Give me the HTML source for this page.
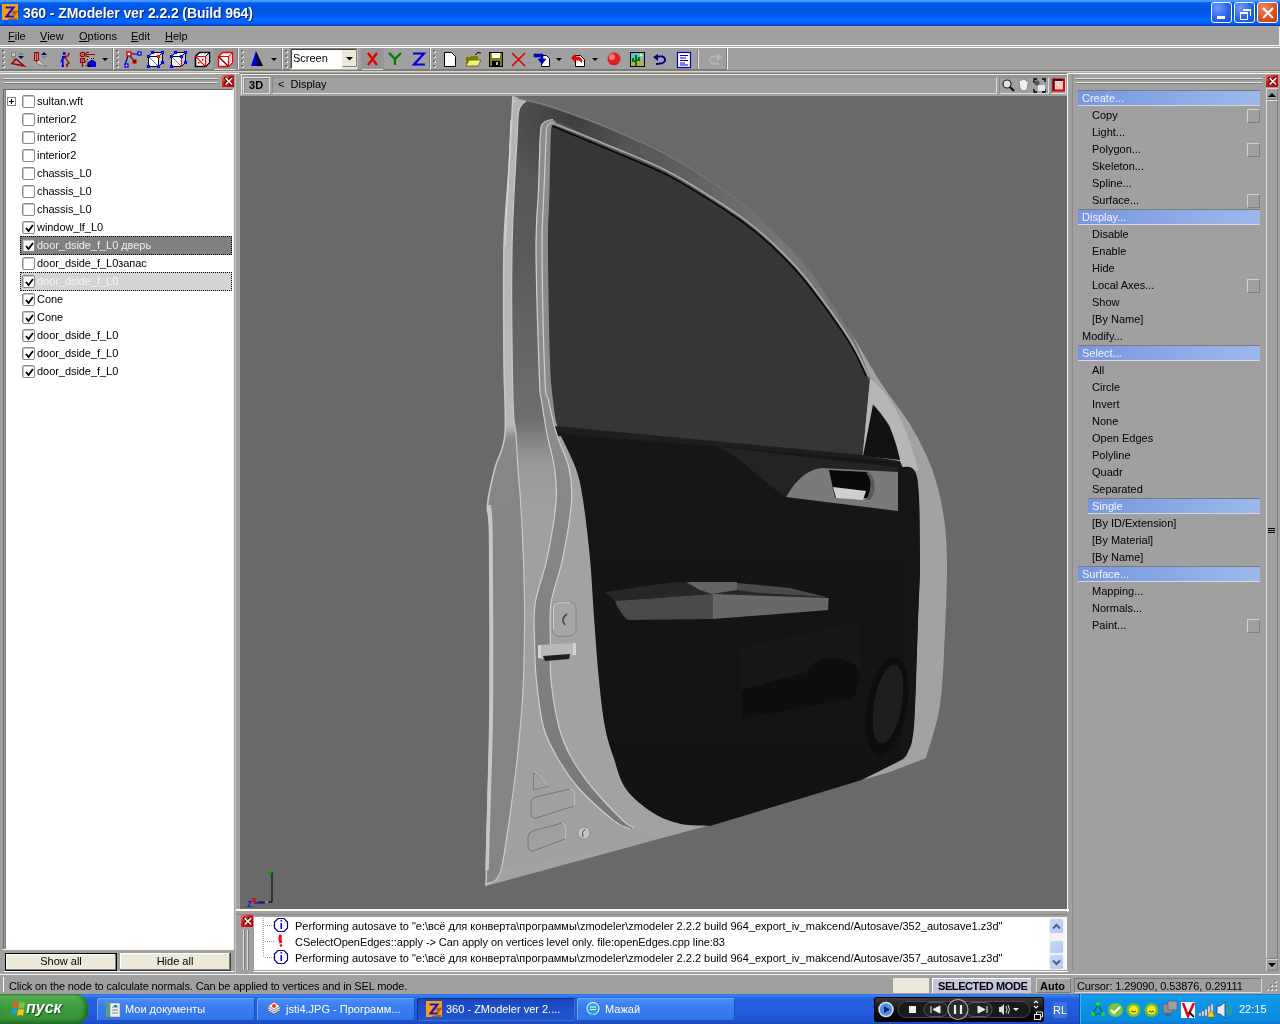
<!DOCTYPE html>
<html><head><meta charset="utf-8">
<style>
*{margin:0;padding:0;box-sizing:border-box}
html,body{width:1280px;height:1024px;overflow:hidden;background:#a0a0a0;font-family:"Liberation Sans",sans-serif;font-size:11px;color:#000}
.a{position:absolute}
#title{left:0;top:0;width:1280px;height:26px;background:linear-gradient(#4a9cff 0px,#3f94ff 1.5px,#0a6cff 2.5px,#005ae6 4px,#0055e2 9px,#0058ea 14px,#0066ff 18px,#0064fa 23px,#0046d4 25px,#0036c0 26px)}
#title .t{left:23px;top:5px;color:#fff;font-weight:bold;font-size:14px;letter-spacing:-0.1px;text-shadow:1px 1px 0 #0a1e70}
.tb{top:2px;width:21px;height:21px;border:1px solid #fff;border-radius:3px;background:radial-gradient(circle at 30% 25%,#6f9cff,#2a63f0 55%,#1a4ed8)}
#menu{left:0;top:26px;width:1280px;height:19px;}
#menu span{position:absolute;top:4px}
.sep2{left:0;width:1280px;height:1px;background:#f0f0f0}
.grip{width:3px;}
.lst div{position:absolute;left:37px;height:18px;line-height:18px;white-space:nowrap}
.cb{position:absolute;left:22px;width:13px;height:13px;border:1px solid #8a8a8a;background:#fff;border-radius:2px;box-shadow:inset 1px 1px 0 #c8c8c8}
.rp div.i{position:absolute;left:1092px;white-space:nowrap}
.hb{position:absolute;left:1078px;width:182px;height:16px;background:linear-gradient(90deg,#7796e0,#9cb9ec);color:#f4f6ff;padding-left:4px;line-height:14px;border-top:1px solid #7a7a7a;border-bottom:1px solid #d8d8d8}
.sq{position:absolute;left:1247px;width:13px;height:14px;border:1px solid;border-color:#d0d0d0 #808080 #808080 #d0d0d0}
.closex{width:12px;height:12px;background:#d21818;border-radius:1px}
</style></head><body><div id="root" style="position:absolute;left:0;top:0;width:1280px;height:1024px;will-change:transform">
<!-- TITLE -->
<div id="title" class="a">
  <svg class="a" style="left:2px;top:4px" width="16" height="16"><rect width="16" height="16" fill="#ff9e00"/><path d="M6,8 H14 L8,15 H15" stroke="#7a4a08" stroke-width="2.6" fill="none" opacity="0.7"/><path d="M3.5,3.5 H11.5 L4.5,12.5 H12" stroke="#c8b0d8" stroke-width="3.4" fill="none"/><path d="M3.5,3.5 H11.5 L4.5,12.5 H12" stroke="#3c0c80" stroke-width="2.2" fill="none"/></svg>
  <div class="a t">360 - ZModeler ver 2.2.2 (Build 964)</div>
  <div class="a tb" style="left:1211px"><div class="a" style="left:5px;top:13px;width:8px;height:3px;background:#fff"></div></div>
  <div class="a tb" style="left:1234px"><div class="a" style="left:5px;top:9px;width:8px;height:8px;border:2px solid #fff;border-width:2px 1px 1px 1px"></div><div class="a" style="left:8px;top:6px;width:8px;height:7px;border:1px solid #fff;border-top-width:2px;border-left:none;border-bottom:none"></div></div>
  <div class="a tb" style="left:1257px;background:radial-gradient(circle at 30% 25%,#f08a6a,#e0501c 55%,#c83c10)"><svg class="a" style="left:4px;top:4px" width="12" height="12"><path d="M1 1L11 11M11 1L1 11" stroke="#fff" stroke-width="2"/></svg></div>
</div>
<!-- MENU -->
<div id="menu" class="a">
  <span style="left:8px"><u>F</u>ile</span>
  <span style="left:40px"><u>V</u>iew</span>
  <span style="left:79px"><u>O</u>ptions</span>
  <span style="left:131px"><u>E</u>dit</span>
  <span style="left:165px"><u>H</u>elp</span>
</div>
<div class="a" style="left:0;top:26px;width:1280px;height:1px;background:#aca899"></div>
<div class="a" style="left:1279px;top:27px;width:1px;height:18px;background:#f0eee4"></div>
<div class="a" style="left:0;top:45px;width:1280px;height:1px;background:#fbfbf8"></div>
<div class="a" style="left:0;top:46px;width:1280px;height:1px;background:#aca899"></div>
<div class="a" style="left:0;top:47px;width:1280px;height:1px;background:#fbfbf8"></div>
<div class="a" style="left:0;top:70px;width:1280px;height:1px;background:#7c7c7c"></div>
<div class="a" style="left:0;top:71px;width:1280px;height:1px;background:#d4d4d4"></div>
<div class="a" style="left:0;top:72px;width:1280px;height:1px;background:#b0aa98"></div>
<div class="a" style="left:240px;top:73px;width:1040px;height:1px;background:#7a7668"></div>
<div class="a" style="left:240px;top:75px;width:828px;height:1px;background:#8a8a8a"></div>

<!-- TOOLBAR -->
<svg class="a" style="left:0;top:46px" width="1280" height="26" viewBox="0 46 1280 26">
<defs>
<g id="grip"><rect x="0" y="0" width="2" height="2" fill="#6e6e6e"/><rect x="1" y="1" width="2" height="2" fill="#e4e4e4"/><rect x="1" y="1" width="1" height="1" fill="#777"/></g>
<g id="grips"><use href="#grip" y="50"/><use href="#grip" y="55"/><use href="#grip" y="60"/><use href="#grip" y="65"/></g>
<path id="dd" d="M0,0 h6 l-3,3 z" fill="#000"/>
</defs>
<!-- toolbar separators (raised borders) -->
<g fill="none">
<path d="M0.5,69.5 H112.5 V48" stroke="#7c7c7c"/>
<path d="M113.5,69.5 V48" stroke="#f0f0f0"/>
<path d="M114,69.5 H237.5 V48" stroke="#7c7c7c"/>
<path d="M238.5,69.5 V48" stroke="#f0f0f0"/>
<path d="M239,69.5 H281.5 V48" stroke="#7c7c7c"/>
<path d="M282.5,69.5 V48" stroke="#f0f0f0"/>
<path d="M283,69.5 H429.5 V48" stroke="#7c7c7c"/>
<path d="M430.5,69.5 V48" stroke="#f0f0f0"/>
<path d="M431,69.5 H726.5 V48" stroke="#7c7c7c"/>
<path d="M727.5,69.5 V48" stroke="#f0f0f0"/>
</g>
<use href="#grips" x="2"/><use href="#grips" x="116"/><use href="#grips" x="241"/><use href="#grips" x="285"/><use href="#grips" x="433"/>
<!-- icon1 -->
<g>
<rect x="11.5" y="52.5" width="4" height="4" fill="#c8c8c8" stroke="#808080"/>
<path d="M13.5,57 V62" stroke="#808080" stroke-width="1.5"/>
<path d="M18,55 l3,-3 l3,3 z" fill="#808080"/><path d="M18,56 l3,3 l3,-3 z" fill="#000080"/>
<path d="M12,63.5 L16,59 L24,66 Z" fill="none" stroke="#a00000" stroke-width="1.5"/>
</g>
<!-- icon2 -->
<g>
<rect x="34.5" y="52.5" width="4" height="8" fill="none" stroke="#a00000"/>
<path d="M36.5,53 V62" stroke="#f00000" stroke-width="1"/>
<path d="M41,55 l3,-3 l3,3 z" fill="#000080"/><path d="M41,56 l3,3 l3,-3 z" fill="#808080"/>
<path d="M36,63 L39,60 L47,67 L38,64 Z" fill="#c8c8c8" stroke="#808080"/>
</g>
<!-- icon3 figure -->
<g fill="#0000f0">
<rect x="63" y="52" width="2.2" height="3"/>
<rect x="62" y="56" width="3" height="2.5"/>
<path d="M62.5,57.5 L60,62 L61,62.5 L63.5,58.5 Z"/>
<rect x="62" y="58" width="1.6" height="8.5"/>
<rect x="61.5" y="65.5" width="2.5" height="1.5"/>
</g>
<g fill="none" stroke="#a00000" stroke-width="1.3">
<path d="M65,53.5 h1"/>
<path d="M65,56.5 L68,56 L69,54 L68,53"/>
<path d="M65,57 L69,63 L66.5,65 L67.5,67"/>
</g>
<!-- icon4 -->
<g>
<circle cx="82.5" cy="54.5" r="2.2" fill="none" stroke="#a00000" stroke-width="1.2"/>
<rect x="82" y="54" width="1.2" height="1.2" fill="#f00"/>
<path d="M86,52.5 h3 M86,54.5 h9 M86,56.5 h3 M86,52.5 v4" stroke="#a00000" stroke-width="1.1" fill="none"/>
<rect x="80.5" y="58.5" width="4" height="4" fill="none" stroke="#a00000" stroke-width="1.1"/>
<path d="M82.5,59 V67" stroke="#a00000" stroke-width="1.3"/>
<path d="M82.5,59 V62" stroke="#f00" stroke-width="1"/>
<g fill="#000"><rect x="85.5" y="61" width="1" height="1"/><rect x="87" y="59" width="1" height="1"/><rect x="91" y="58" width="1" height="1"/><rect x="93" y="58" width="1" height="1"/><rect x="85.5" y="65" width="1" height="1"/></g>
<path d="M87.5,67 V63 L92,60 L96,62.5 V67 Z" fill="#0000ff"/>
<path d="M87.5,63 L92,60 L96,62.5" stroke="#000" stroke-width="0.8" fill="none"/>
<path d="M87.5,63 L87.5,67 L91,67 Z" fill="#000"/>
</g>
<use href="#dd" x="102" y="58"/>
<!-- icon5 vertex lines -->
<g>
<path d="M129,54 H139 M128,56 L125,65 M130,56 L134,61" stroke="#000080" stroke-width="1.2"/>
<rect x="127" y="52" width="4" height="4" fill="#fff" stroke="#f00000" stroke-width="1.5"/>
<rect x="138" y="52" width="3" height="3" fill="#fff" stroke="#0000f0" stroke-width="1.3"/>
<rect x="133" y="60" width="3" height="3" fill="#000" stroke="#f00000" stroke-width="1.3"/>
<rect x="125" y="64" width="3" height="3" fill="#fff" stroke="#0000f0" stroke-width="1.3"/>
</g>
<!-- cubes -->
<g id="cubeA">
<path d="M148.5,56.5 H158.5 V66.5 H148.5 Z" fill="#fff" stroke="#000"/>
<path d="M148.5,56.5 L152.5,52.5 H162.5 L158.5,56.5 Z" fill="#fff" stroke="#000"/>
<path d="M158.5,56.5 L162.5,52.5 V62.5 L158.5,66.5 Z" fill="#c8d4d4" stroke="#000"/>
<path d="M149,57 L158,66" stroke="#777"/>
</g>
<g fill="#fff" stroke="#0000f0" stroke-width="1.2"><rect x="147.5" y="55.5" width="2" height="2"/><rect x="151.5" y="51.5" width="2" height="2"/><rect x="161.5" y="51.5" width="2" height="2"/><rect x="161.5" y="61.5" width="2" height="2"/><rect x="147.5" y="65.5" width="2" height="2"/><rect x="157.5" y="65.5" width="2" height="2"/></g>
<rect x="157.5" y="55.5" width="2" height="2" fill="#fff" stroke="#f00" stroke-width="1.2"/>
<use href="#cubeA" x="23"/>
<g fill="#fff" stroke="#0000f0" stroke-width="1.2"><rect x="170.5" y="55.5" width="2" height="2"/><rect x="174.5" y="51.5" width="2" height="2"/><rect x="184.5" y="51.5" width="2" height="2"/><rect x="184.5" y="61.5" width="2" height="2"/><rect x="170.5" y="65.5" width="2" height="2"/><rect x="180.5" y="55.5" width="2" height="2"/></g>
<path d="M181.5,58 V67" stroke="#f00" stroke-width="1.2"/>
<!-- cube 3 -->
<path d="M195.5,56.5 L199.5,52.5 H209.5 V62.5 L205.5,66.5 H195.5 Z" fill="#fff" stroke="#000" stroke-width="1.6"/>
<path d="M205.5,56.5 L209.5,52.5 V62.5 L205.5,66.5 Z" fill="#d0d8d8" stroke="#000" stroke-width="1"/>
<path d="M195,56.5 H205.5 V66.5 M196,57 L205,66" fill="none" stroke="#f00" stroke-width="1.2"/>
<rect x="198" y="62" width="1.5" height="1.5" fill="#800"/><rect x="202" y="59" width="1.5" height="1.5" fill="#800"/>
<!-- cube 4 pressed -->
<rect x="213" y="48" width="24" height="21" fill="#969696"/>
<path d="M214,69.5 H236" stroke="#d8d8d8"/>
<path d="M218.5,56.5 L222.5,52.5 H232.5 V62.5 L228.5,66.5 H218.5 Z" fill="#fff" stroke="#f00" stroke-width="1.4"/>
<path d="M228.5,56.5 L232.5,52.5 V62.5 L228.5,66.5 Z" fill="#d0d8d8" stroke="#f00" stroke-width="1"/>
<path d="M218.5,56.5 H228.5 V66.5" fill="none" stroke="#f00" stroke-width="1.2"/>
<path d="M219,57 L228,66" stroke="#600" stroke-width="1.2"/>
<!-- cone -->
<path d="M256,51 L251,66 H256 Z" fill="#0000e0"/><path d="M256,51 L261,66 H256 Z" fill="#000090"/><path d="M256,51 L263,66 H259 Z" fill="#000"/>
<use href="#dd" x="271" y="58"/>
<!-- combo -->
<rect x="290.5" y="48.5" width="67" height="21" fill="#ece9d8" stroke="none"/>
<path d="M290.5,69 V48.5 H357.5" stroke="#808080" fill="none"/>
<path d="M291.5,68 V49.5 H356.5" stroke="#404040" fill="none"/>
<rect x="292" y="50" width="50" height="19" fill="#fff"/>
<rect x="342" y="50" width="15" height="17" fill="#ece9d8"/>
<path d="M342.5,66.5 H356.5 V50" stroke="#808080" fill="none"/>
<path d="M346,57 h7 l-3.5,3.5 z" fill="#000"/>
<!-- XYZ -->
<rect x="361" y="48" width="23" height="21" fill="#969696"/>
<path d="M362,69.5 H383" stroke="#d8d8d8"/>
<path d="M368,53 L377,65 M377,53 L368,65" stroke="#e00000" stroke-width="2.4"/>
<path d="M389,53 L395,59 L401,53 M395,59 V65" stroke="#008000" stroke-width="2.4" fill="none"/>
<path d="M413,53.5 H424 L414,64.5 H425" stroke="#0000e0" stroke-width="2.2" fill="none"/>
<!-- new doc -->
<path d="M444.5,52.5 H451.5 L455.5,56.5 V66.5 H444.5 Z" fill="#fff" stroke="#000"/>
<!-- open -->
<path d="M466,57 H470 L471,56 H478 V66 H466 Z" fill="#808000"/>
<path d="M466,66 L469,60 H481 L478,66 Z" fill="#f0f080" stroke="#606000" stroke-width="0.8"/>
<path d="M475,55 Q478,51 481,53" stroke="#000" fill="none"/>
<!-- save -->
<rect x="489.5" y="52.5" width="13" height="14" fill="#808000" stroke="#000"/>
<rect x="492" y="53" width="8" height="5" fill="#fff"/>
<rect x="492" y="61" width="8" height="5" fill="#000"/>
<rect x="496" y="62" width="2" height="3" fill="#c0c0c0"/>
<!-- red X -->
<path d="M512,53 L525,66 M525,53 L512,66" stroke="#e00000" stroke-width="1.6"/>
<!-- import -->
<path d="M541.5,55.5 H546.5 L549.5,58.5 V66.5 H541.5 Z" fill="#fff" stroke="#000"/>
<path d="M534,54 H543 V59 H546 L542,64 L538,59 H541 V57 H534 Z" fill="#0000e0" stroke="#000080" stroke-width="0.6"/>
<use href="#dd" x="556" y="58"/>
<!-- export -->
<path d="M575.5,55.5 H580.5 L584.5,59.5 V66.5 H575.5 Z" fill="#fff" stroke="#000"/>
<path d="M571,58 L575,54 V56.5 H579 L582,59 V63 L579,60.5 H575 V62 Z" fill="#f00000"/>
<use href="#dd" x="592" y="58"/>
<!-- red sphere -->
<circle cx="614" cy="59" r="6.5" fill="#e02020"/>
<circle cx="612" cy="57" r="3" fill="#ff9090" opacity="0.8"/>
<!-- cactus image -->
<rect x="630.5" y="52.5" width="14" height="14" fill="#b8a860" stroke="#000"/>
<rect x="631" y="53" width="13" height="7" fill="#70b8e0"/>
<path d="M636,66 V55 M633,58 V61 H636 M639,57 V60 H636" stroke="#008000" stroke-width="2" fill="none"/>
<circle cx="641" cy="55" r="1.5" fill="#ffff00"/>
<!-- undo -->
<path d="M656,64 Q666,64 665,59 Q664,55 656,57" stroke="#000080" stroke-width="1.8" fill="none"/>
<path d="M653,57 L658,54 L658,61 Z" fill="#000080"/>
<!-- document -->
<rect x="677.5" y="52.5" width="13" height="15" fill="#fff" stroke="#0000c0" stroke-width="1.2"/>
<path d="M680,55.5 h8 M680,58 h6 M680,60.5 h8 M680,63 h5 M680,65 h8" stroke="#0000c0"/>
<!-- separator -->
<path d="M697.5,49 V69" stroke="#808080"/><path d="M698.5,49 V69" stroke="#e8e8e8"/>
<!-- redo greyed -->
<path d="M719,64 Q709,64 710,59 Q711,55 719,57" stroke="#b8b8b8" stroke-width="1.5" fill="none"/>
<path d="M722,57 L717,54 L717,61 Z" fill="#b8b8b8"/>
</svg>

<div class="a" style="left:293px;top:52px;font-size:11px">Screen</div>
<!-- LEFT PANEL -->
<div class="a" style="left:5px;top:89px;width:229px;height:860px;background:#fff;border-left:1px solid #808080;border-top:1px solid #808080"></div>
<div class="a" style="left:7px;top:97px;width:9px;height:9px;border:1px solid #808080;background:#fff"><div class="a" style="left:1px;top:3px;width:5px;height:1px;background:#000"></div><div class="a" style="left:3px;top:1px;width:1px;height:5px;background:#000"></div></div>
<div class="cb" style="top:95px"></div>
<div class="a" style="left:37px;top:95px;white-space:nowrap;color:#000;letter-spacing:-0.05px">sultan.wft</div>
<div class="cb" style="top:113px"></div>
<div class="a" style="left:37px;top:113px;white-space:nowrap;color:#000;letter-spacing:-0.05px">interior2</div>
<div class="cb" style="top:131px"></div>
<div class="a" style="left:37px;top:131px;white-space:nowrap;color:#000;letter-spacing:-0.05px">interior2</div>
<div class="cb" style="top:149px"></div>
<div class="a" style="left:37px;top:149px;white-space:nowrap;color:#000;letter-spacing:-0.05px">interior2</div>
<div class="cb" style="top:167px"></div>
<div class="a" style="left:37px;top:167px;white-space:nowrap;color:#000;letter-spacing:-0.05px">chassis_L0</div>
<div class="cb" style="top:185px"></div>
<div class="a" style="left:37px;top:185px;white-space:nowrap;color:#000;letter-spacing:-0.05px">chassis_L0</div>
<div class="cb" style="top:203px"></div>
<div class="a" style="left:37px;top:203px;white-space:nowrap;color:#000;letter-spacing:-0.05px">chassis_L0</div>
<div class="cb" style="top:221px"><svg class="a" style="left:2px;top:2px" width="9" height="9"><path d="M1,4 L3.5,7 L8,1" fill="none" stroke="#000" stroke-width="1.8"/></svg></div>
<div class="a" style="left:37px;top:221px;white-space:nowrap;color:#000;letter-spacing:-0.05px">window_lf_L0</div>
<div class="a" style="left:20px;top:236px;width:212px;height:19px;background:#808080;border:1px dotted #000"></div>
<div class="cb" style="top:239px"><svg class="a" style="left:2px;top:2px" width="9" height="9"><path d="M1,4 L3.5,7 L8,1" fill="none" stroke="#000" stroke-width="1.8"/></svg></div>
<div class="a" style="left:37px;top:239px;white-space:nowrap;color:#ececec;letter-spacing:-0.05px">door_dside_f_L0 дверь</div>
<div class="cb" style="top:257px"></div>
<div class="a" style="left:37px;top:257px;white-space:nowrap;color:#000;letter-spacing:-0.05px">door_dside_f_L0запас</div>
<div class="a" style="left:20px;top:272px;width:212px;height:19px;background:#d4d4d4;border:1px dotted #000"></div>
<div class="cb" style="top:275px"><svg class="a" style="left:2px;top:2px" width="9" height="9"><path d="M1,4 L3.5,7 L8,1" fill="none" stroke="#000" stroke-width="1.8"/></svg></div>
<div class="a" style="left:37px;top:275px;white-space:nowrap;color:#f4f4f4;letter-spacing:-0.05px">door_dside_f_L0</div>
<div class="cb" style="top:293px"><svg class="a" style="left:2px;top:2px" width="9" height="9"><path d="M1,4 L3.5,7 L8,1" fill="none" stroke="#000" stroke-width="1.8"/></svg></div>
<div class="a" style="left:37px;top:293px;white-space:nowrap;color:#000;letter-spacing:-0.05px">Cone</div>
<div class="cb" style="top:311px"><svg class="a" style="left:2px;top:2px" width="9" height="9"><path d="M1,4 L3.5,7 L8,1" fill="none" stroke="#000" stroke-width="1.8"/></svg></div>
<div class="a" style="left:37px;top:311px;white-space:nowrap;color:#000;letter-spacing:-0.05px">Cone</div>
<div class="cb" style="top:329px"><svg class="a" style="left:2px;top:2px" width="9" height="9"><path d="M1,4 L3.5,7 L8,1" fill="none" stroke="#000" stroke-width="1.8"/></svg></div>
<div class="a" style="left:37px;top:329px;white-space:nowrap;color:#000;letter-spacing:-0.05px">door_dside_f_L0</div>
<div class="cb" style="top:347px"><svg class="a" style="left:2px;top:2px" width="9" height="9"><path d="M1,4 L3.5,7 L8,1" fill="none" stroke="#000" stroke-width="1.8"/></svg></div>
<div class="a" style="left:37px;top:347px;white-space:nowrap;color:#000;letter-spacing:-0.05px">door_dside_f_L0</div>
<div class="cb" style="top:365px"><svg class="a" style="left:2px;top:2px" width="9" height="9"><path d="M1,4 L3.5,7 L8,1" fill="none" stroke="#000" stroke-width="1.8"/></svg></div>
<div class="a" style="left:37px;top:365px;white-space:nowrap;color:#000;letter-spacing:-0.05px">door_dside_f_L0</div>

<!-- VIEWPORT -->
<div class="a" style="left:240px;top:74px;width:828px;height:22px;border-top:1px solid #d8d8d8"></div>
<div class="a" style="left:240px;top:96px;width:827px;height:813px;background:#696969"></div>
<svg class="a" style="left:240px;top:96px" width="827" height="814" viewBox="240 96 827 814">
<defs>
<linearGradient id="fr" x1="0" y1="96" x2="0" y2="520" gradientUnits="userSpaceOnUse"><stop offset="0" stop-color="#545454"/><stop offset="0.36" stop-color="#5a5a5a"/><stop offset="0.67" stop-color="#6a6a6a"/><stop offset="0.76" stop-color="#6e6e6e"/><stop offset="0.86" stop-color="#989898"/><stop offset="1" stop-color="#a0a0a0"/></linearGradient>
<linearGradient id="frA" x1="0" y1="96" x2="0" y2="520" gradientUnits="userSpaceOnUse"><stop offset="0" stop-color="#b4b4b4"/><stop offset="0.776" stop-color="#b8b8b8"/><stop offset="0.81" stop-color="#888"/><stop offset="1" stop-color="#858585"/></linearGradient>
<linearGradient id="gr" x1="0" y1="96" x2="0" y2="820" gradientUnits="userSpaceOnUse"><stop offset="0" stop-color="#8c8c8c"/><stop offset="0.45" stop-color="#8c8c8c"/><stop offset="0.55" stop-color="#888"/><stop offset="1" stop-color="#787878"/></linearGradient>
<radialGradient id="cornerSh" cx="570" cy="118" r="70" gradientUnits="userSpaceOnUse"><stop offset="0" stop-color="#000" stop-opacity="0.28"/><stop offset="1" stop-color="#000" stop-opacity="0"/></radialGradient>
<linearGradient id="bp" x1="0" y1="430" x2="0" y2="830" gradientUnits="userSpaceOnUse"><stop offset="0" stop-color="#171717"/><stop offset="1" stop-color="#121212"/></linearGradient>
</defs>
<path d="M513.0,96.0 C520.2,98.0 539.5,102.5 556.0,108.0 C572.5,113.5 593.2,121.0 612.0,129.0 C630.8,137.0 650.2,145.7 669.0,156.0 C687.8,166.3 708.7,179.5 725.0,191.0 C741.3,202.5 753.0,211.8 767.0,225.0 C781.0,238.2 795.3,252.5 809.0,270.0 C822.7,287.5 837.0,311.2 849.0,330.0 C861.0,348.8 870.7,367.0 881.0,383.0 C891.3,399.0 902.5,411.7 911.0,426.0 C919.5,440.3 926.7,454.7 932.0,469.0 C937.3,483.3 940.5,496.8 943.0,512.0 C945.5,527.2 946.7,540.3 947.0,560.0 C947.3,579.7 946.2,605.8 945.0,630.0 C943.8,654.2 943.2,683.7 940.0,705.0 C936.8,726.3 928.3,749.2 926.0,758.0 L890,772 L862,780 L710,825 L486,886 C486.3,871.7 487.3,831.0 488.0,800.0 C488.7,769.0 489.7,743.8 490.0,700.0 C490.3,656.2 490.0,569.5 489.6,537.0 C489.2,504.5 486.6,516.5 487.5,505.0 C488.4,493.5 492.1,479.8 495.0,468.0 C497.9,456.2 503.5,451.7 505.0,434.0 C506.5,416.3 504.2,393.3 504.0,362.0 C503.8,330.7 503.2,278.3 504.0,246.0 C504.8,213.7 507.5,193.0 509.0,168.0 C510.5,143.0 512.3,108.0 513.0,96.0 Z" fill="#a2a2a2"/>
<path d="M486.0,886.0 C486.3,871.7 487.3,831.0 488.0,800.0 C488.7,769.0 489.7,743.8 490.0,700.0 C490.3,656.2 490.0,569.5 489.6,537.0 C489.2,504.5 486.6,516.5 487.5,505.0 C488.4,493.5 492.1,479.8 495.0,468.0 C497.9,456.2 503.5,451.7 505.0,434.0 C506.5,416.3 504.2,393.3 504.0,362.0 C503.8,330.7 503.2,278.3 504.0,246.0 C504.8,213.7 507.5,193.0 509.0,168.0 C510.5,143.0 512.3,108.0 513.0,96.0 C515.2,96.8 523.8,100.2 526.0,101.0 C524.8,102.5 520.5,103.5 519.0,110.0 C517.5,116.5 518.2,116.7 517.0,140.0 C515.8,163.3 512.7,206.7 512.0,250.0 C511.3,293.3 512.3,369.3 513.0,400.0 C513.7,430.7 515.2,422.3 516.0,434.0 C516.8,445.7 517.2,459.0 518.0,470.0 C518.8,481.0 519.6,485.2 520.5,500.0 C521.4,514.8 522.7,539.1 523.4,558.6 C524.1,578.1 524.7,595.1 524.6,617.0 C524.5,638.9 524.1,667.7 523.0,690.0 C521.9,712.3 519.7,733.8 518.0,751.0 C516.3,768.2 515.8,773.2 513.0,793.0 C510.2,812.8 505.3,854.8 501.0,870.0 C496.7,885.2 489.3,881.7 487.0,884.0 Z" fill="url(#frA)"/>
<path d="M526,101 C531.0,102.3 541.7,104.2 556.0,109.0 C570.3,113.8 593.2,122.0 612.0,130.0 C630.8,138.0 650.2,146.7 669.0,157.0 C687.8,167.3 708.7,180.5 725.0,192.0 C741.3,203.5 753.0,212.8 767.0,226.0 C781.0,239.2 795.3,253.5 809.0,271.0 C822.7,288.5 838.8,313.0 849.0,331.0 C859.2,349.0 866.5,371.0 870.0,379.0 L870,381 C866.5,374.2 859.2,356.2 849.0,340.0 C838.8,323.8 820.3,298.5 809.0,284.0 C797.7,269.5 790.3,262.3 781.0,253.0 C771.7,243.7 762.3,235.5 753.0,228.0 C743.7,220.5 739.0,217.0 725.0,208.0 C711.0,199.0 687.8,183.8 669.0,174.0 C650.2,164.2 631.2,157.2 612.0,149.0 C592.8,140.8 563.7,129.0 554.0,125.0 L551,127 L541,127 C539.8,148.3 539.2,171.7 538.5,190.0 C537.8,208.3 535.8,218.3 536.0,250.0 C536.2,281.7 538.6,355.0 539.5,380.0 C540.4,405.0 540.2,391.0 541.5,400.0 C542.8,409.0 544.8,422.7 547.0,434.0 C549.2,445.3 553.0,456.7 554.5,468.0 C556.0,479.3 557.2,486.9 556.0,502.0 C554.8,517.1 550.5,541.8 547.0,558.6 C543.5,575.4 537.3,589.4 535.2,603.0 C533.1,616.6 534.3,627.2 534.5,640.0 C534.7,652.8 534.9,665.5 536.4,680.0 C537.9,694.5 539.9,714.0 543.4,727.0 C546.9,740.0 551.5,747.7 557.5,758.0 C563.5,768.3 570.0,778.6 579.4,789.0 C588.8,799.4 605.3,813.9 613.8,820.6 C622.2,827.3 627.3,827.6 630.0,829.0 L660,838 L501,870 C503.0,857.2 510.2,812.8 513.0,793.0 C515.8,773.2 516.3,768.2 518.0,751.0 C519.7,733.8 521.9,712.3 523.0,690.0 C524.1,667.7 524.5,638.9 524.6,617.0 C524.7,595.1 524.1,578.1 523.4,558.6 C522.7,539.1 521.4,514.8 520.5,500.0 C519.6,485.2 518.8,481.0 518.0,470.0 C517.2,459.0 516.8,445.7 516.0,434.0 C515.2,422.3 513.7,430.7 513.0,400.0 C512.3,369.3 511.3,293.3 512.0,250.0 C512.7,206.7 515.8,163.3 517.0,140.0 C518.2,116.7 517.5,116.5 519.0,110.0 C520.5,103.5 524.8,102.5 526.0,101.0 Z" fill="url(#fr)"/>
<path d="M526,101 L556,109 L612,130 L660,152 L612,147 L553,119.5 Q543,120 541,127 L540,200 L515,200 L519,110 Z" fill="url(#cornerSh)"/>
<path d="M540,140 L541,127 Q543,120 553,119.5 L556,122 L551,127 C550.9,129.2 550.9,129.5 550.6,140.0 C550.4,150.5 549.9,171.7 549.5,190.0 C549.1,208.3 547.9,221.3 548.0,250.0 C548.1,278.7 549.2,337.0 550.0,362.0 C550.8,387.0 552.0,389.0 553.0,400.0 C554.0,411.0 553.3,416.7 556.0,428.0 C558.7,439.3 566.4,455.7 569.0,468.0 C571.6,480.3 572.5,486.9 571.5,502.0 C570.5,517.1 566.1,541.8 562.7,558.6 C559.3,575.4 553.0,589.4 551.0,603.0 C549.0,616.6 550.4,627.2 550.4,640.0 C550.4,652.8 549.6,665.5 551.0,680.0 C552.4,694.5 555.6,714.0 559.0,727.0 C562.4,740.0 565.9,747.7 571.6,758.0 C577.3,768.3 584.8,778.6 593.4,789.0 C602.0,799.4 616.2,814.1 623.0,820.6 C629.8,827.1 632.2,826.8 634.0,828.0 L630,829 C627.3,827.6 622.2,827.3 613.8,820.6 C605.3,813.9 588.8,799.4 579.4,789.0 C570.0,778.6 563.5,768.3 557.5,758.0 C551.5,747.7 546.9,740.0 543.4,727.0 C539.9,714.0 537.9,694.5 536.4,680.0 C534.9,665.5 534.7,652.8 534.5,640.0 C534.3,627.2 533.1,616.6 535.2,603.0 C537.3,589.4 543.5,575.4 547.0,558.6 C550.5,541.8 554.8,517.1 556.0,502.0 C557.2,486.9 556.0,479.3 554.5,468.0 C553.0,456.7 549.2,445.3 547.0,434.0 C544.8,422.7 542.8,409.0 541.5,400.0 C540.2,391.0 540.4,405.0 539.5,380.0 C538.6,355.0 536.2,281.7 536.0,250.0 C535.8,218.3 537.8,208.3 538.5,190.0 C539.2,171.7 539.8,148.3 540.0,140.0 Z" fill="url(#gr)"/>
<path d="M540.0,140.0 C539.8,148.3 539.2,171.7 538.5,190.0 C537.8,208.3 535.8,218.3 536.0,250.0 C536.2,281.7 538.6,355.0 539.5,380.0 C540.4,405.0 540.2,391.0 541.5,400.0 C542.8,409.0 544.8,422.7 547.0,434.0 C549.2,445.3 553.0,456.7 554.5,468.0 C556.0,479.3 557.2,486.9 556.0,502.0 C554.8,517.1 550.5,541.8 547.0,558.6 C543.5,575.4 537.3,589.4 535.2,603.0 C533.1,616.6 534.3,627.2 534.5,640.0 C534.7,652.8 534.9,665.5 536.4,680.0 C537.9,694.5 539.9,714.0 543.4,727.0 C546.9,740.0 551.5,747.7 557.5,758.0 C563.5,768.3 570.0,778.6 579.4,789.0 C588.8,799.4 605.3,813.9 613.8,820.6 C622.2,827.3 627.3,827.6 630.0,829.0" fill="none" stroke="#cfcfcf" stroke-width="1.2"/>
<path d="M546.0,140.0 C545.7,148.3 544.7,171.7 544.0,190.0 C543.3,208.3 541.8,218.3 542.0,250.0 C542.2,281.7 543.9,355.0 545.0,380.0 C546.1,405.0 546.5,391.0 548.4,400.0 C550.3,409.0 553.2,422.7 556.6,434.0 C560.0,445.3 566.5,456.7 569.0,468.0 C571.5,479.3 572.5,486.9 571.5,502.0 C570.5,517.1 566.1,541.8 562.7,558.6 C559.3,575.4 553.0,589.4 551.0,603.0 C549.0,616.6 550.4,627.2 550.4,640.0 C550.4,652.8 549.6,665.5 551.0,680.0 C552.4,694.5 555.6,714.0 559.0,727.0 C562.4,740.0 565.9,747.7 571.6,758.0 C577.3,768.3 584.8,778.6 593.4,789.0 C602.0,799.4 616.2,814.1 623.0,820.6 C629.8,827.1 632.2,826.8 634.0,828.0" fill="none" stroke="#cfcfcf" stroke-width="1.2"/>
<path d="M540,140 L541,127 Q543,120 553,119.5" fill="none" stroke="#c8c8c8" stroke-width="1.2"/>
<path d="M546,140 L546.5,128 Q548,123 553,122.5" fill="none" stroke="#c0c0c0" stroke-width="1.2"/>
<path d="M538,250 L538,134 Q539,122 549,122 L553,124 L549,130 L548,250 Z" fill="none"/>
<path d="M526.0,101.0 C524.8,102.5 520.5,103.5 519.0,110.0 C517.5,116.5 518.2,116.7 517.0,140.0 C515.8,163.3 512.7,206.7 512.0,250.0 C511.3,293.3 512.3,369.3 513.0,400.0 C513.7,430.7 515.2,422.3 516.0,434.0 C516.8,445.7 517.2,459.0 518.0,470.0 C518.8,481.0 519.6,485.2 520.5,500.0 C521.4,514.8 522.7,539.1 523.4,558.6 C524.1,578.1 524.7,595.1 524.6,617.0 C524.5,638.9 524.1,667.7 523.0,690.0 C521.9,712.3 519.7,733.8 518.0,751.0 C516.3,768.2 515.8,773.2 513.0,793.0 C510.2,812.8 505.3,854.8 501.0,870.0 C496.7,885.2 489.3,881.7 487.0,884.0" fill="none" stroke="#c8c8c8" stroke-width="1.2"/>
<path d="M486.0,886.0 C486.3,871.7 487.3,831.0 488.0,800.0 C488.7,769.0 489.7,743.8 490.0,700.0 C490.3,656.2 490.0,569.5 489.6,537.0 C489.2,504.5 486.6,516.5 487.5,505.0 C488.4,493.5 492.1,479.8 495.0,468.0 C497.9,456.2 503.5,451.7 505.0,434.0 C506.5,416.3 504.2,393.3 504.0,362.0 C503.8,330.7 503.2,278.3 504.0,246.0 C504.8,213.7 507.5,193.0 509.0,168.0 C510.5,143.0 512.3,108.0 513.0,96.0" fill="none" stroke="#c6c6c6" stroke-width="1.6"/>
<path d="M487.0,870.0 C487.3,858.3 488.2,828.3 489.0,800.0 C489.8,771.7 491.2,743.8 491.5,700.0 C491.8,656.2 491.4,569.5 491.0,537.0 C490.6,504.5 489.3,510.3 489.0,505.0" fill="none" stroke="#c6c6c6" stroke-width="3.5"/>
<path d="M505,246 L509,168 L511,120" fill="none" stroke="#d4d4d4" stroke-width="1.2"/>
<path d="M518.0,98.0 C524.3,99.8 540.3,103.7 556.0,109.0 C571.7,114.3 593.2,122.0 612.0,130.0 C630.8,138.0 650.2,146.7 669.0,157.0 C687.8,167.3 708.7,180.5 725.0,192.0 C741.3,203.5 753.0,212.8 767.0,226.0 C781.0,239.2 795.3,253.5 809.0,271.0 C822.7,288.5 838.8,313.0 849.0,331.0 C859.2,349.0 866.5,371.0 870.0,379.0" fill="none" stroke="#646464" stroke-width="1.2"/>
<linearGradient id="tb" x1="660" y1="0" x2="780" y2="0" gradientUnits="userSpaceOnUse"><stop offset="0" stop-color="#5a5a5a"/><stop offset="1" stop-color="#767676"/></linearGradient>
<path d="M640.0,142.0 C644.8,144.5 654.8,148.7 669.0,157.0 C683.2,165.3 708.7,180.5 725.0,192.0 C741.3,203.5 753.0,212.8 767.0,226.0 C781.0,239.2 795.3,253.5 809.0,271.0 C822.7,288.5 838.8,313.0 849.0,331.0 C859.2,349.0 866.5,371.0 870.0,379.0 L868,378 C864.8,371.5 858.8,354.8 849.0,339.0 C839.2,323.2 820.3,297.5 809.0,283.0 C797.7,268.5 790.3,261.3 781.0,252.0 C771.7,242.7 762.3,234.5 753.0,227.0 C743.7,219.5 739.0,216.0 725.0,207.0 C711.0,198.0 683.2,181.7 669.0,173.0 C654.8,164.3 644.8,158.0 640.0,155.0 Z" fill="url(#tb)"/>
<path d="M554,125 C563.7,129.0 592.8,140.8 612.0,149.0 C631.2,157.2 650.2,164.2 669.0,174.0 C687.8,183.8 711.0,199.0 725.0,208.0 C739.0,217.0 743.7,220.5 753.0,228.0 C762.3,235.5 771.7,243.7 781.0,253.0 C790.3,262.3 797.7,269.5 809.0,284.0 C820.3,298.5 838.8,323.8 849.0,340.0 C859.2,356.2 866.5,374.2 870.0,381.0 L862.6,456 L558,427 C555.5,423.3 554.0,411.0 553.0,400.0 C552.0,389.0 550.8,387.0 550.0,362.0 C549.2,337.0 548.1,278.7 548.0,250.0 C547.9,221.3 549.1,208.3 549.5,190.0 C549.9,171.7 550.4,149.8 550.6,140.0 C550.9,130.2 550.9,132.5 551.0,131.0 Q551,125 554,125 Z" fill="#363636"/>
<path d="M552.0,126.0 C562.0,130.2 592.5,142.7 612.0,151.0 C631.5,159.3 650.2,166.2 669.0,176.0 C687.8,185.8 711.0,201.0 725.0,210.0 C739.0,219.0 743.7,222.5 753.0,230.0 C762.3,237.5 771.7,245.7 781.0,255.0 C790.3,264.3 797.7,271.5 809.0,286.0 C820.3,300.5 839.5,327.0 849.0,342.0 C858.5,357.0 863.2,370.3 866.0,376.0" fill="none" stroke="#000" stroke-width="1.3"/>
<path d="M550.0,122.0 C560.3,126.2 592.2,138.7 612.0,147.0 C631.8,155.3 650.2,162.2 669.0,172.0 C687.8,181.8 711.0,197.0 725.0,206.0 C739.0,215.0 743.7,218.5 753.0,226.0 C762.3,233.5 771.7,241.7 781.0,251.0 C790.3,260.3 797.7,267.5 809.0,282.0 C820.3,296.5 839.0,322.2 849.0,338.0 C859.0,353.8 865.7,370.5 869.0,377.0" fill="none" stroke="#a8a8a8" stroke-width="1.6"/>
<!-- pillar -->
<path d="M870,379 C878,385 888,395 896,410 C905,428 912,445 918,470 L904,470 L900,464 L862.6,457 Z" fill="#b6b6b6"/>
<path d="M873,404.4 C880,412 886,420 889.4,426 C895,440 898,450 900,460 L863,456 Z" fill="#121212"/>
<!-- belt band -->
<path d="M555,426 L862.6,455 L900,461 L904,470 L718.7,452 L558,436 Z" fill="#1e1e1e"/>
<path d="M557.0,428.0 C560.1,434.7 571.4,456.0 575.7,468.0 C580.0,480.0 580.6,484.9 583.0,500.0 C585.4,515.1 588.2,539.1 590.0,558.6 C591.8,578.1 592.5,596.8 594.0,617.0 C595.5,637.2 597.2,661.7 599.0,680.0 C600.8,698.3 602.5,714.0 605.0,727.0 C607.5,740.0 610.2,747.7 613.8,758.0 C617.2,768.3 619.5,779.9 626.0,789.0 C632.5,798.1 643.8,807.0 652.8,812.8 C661.8,818.6 670.5,821.5 680.0,823.8 C689.5,826.0 705.0,825.6 710.0,826.0 L862,780 C901.2,759.8 904.7,759.8 907.0,754.0 C909.3,748.2 912.2,748.3 914.0,726.0 C915.8,703.7 917.0,647.7 918.0,620.0 C919.0,592.3 920.2,583.8 920.0,560.0 C919.8,536.2 920.3,492.5 917.0,477.0 C913.7,461.5 902.8,468.7 900.0,467.0 L898,462 L718.7,446.7 L558,434 Z" fill="url(#bp)"/>
<path d="M900,467 L917,477 L920,560 L918,620 L914,726 L907,754 L900,761 L905,620 L904,540 L897,515 Z" fill="#161616"/>
<!-- upper trim strip -->
<path d="M718,447 C745,460 760,480 786,497 L898,511 L898,467 Z" fill="#232323"/>
<!-- handle bezel -->
<path d="M786,497 C796,480 806,470 822,468 L898,472 L898,511 Z" fill="#7a7a7a"/>
<path d="M829,470 L868,472 C872,476 872,488 868,498 L835,498 Z" fill="#0a0a0a"/>
<path d="M833,487 L866,491 L863,500 L836,498 Z" fill="#cfcfcf"/>
<path d="M868,472 C876,476 877,492 870,500 L866,500 C872,490 872,478 866,473 Z" fill="#5a5a5a"/>
<!-- armrest -->
<path d="M605,592 L675,582 L788,588 L826,597 L829,599 L712,594 L615,601 Z" fill="#272727"/>
<path d="M686,582 L737,582 L737,590 L712,594 L700,590 Z" fill="#646464"/>
<path d="M737,583 L790,588 L826,597 L760,593 L737,590 Z" fill="#4a4a4a"/>
<path d="M615,601 L712.5,594 L712.5,619 L628,620 Q620,614 615,601 Z" fill="#4a4a4a"/>
<path d="M712.5,594 L828.75,598 L828,610 L712.5,619 Z" fill="#686868"/>
<!-- pocket & speaker -->
<path d="M740,648 L829,628 L858,622 L861,690 L742,718 Z" fill="#171717"/>
<path d="M741,690 L806,672 C812,662 822,657 835,658 C852,660 862,668 860,680 L853,698 L742,718 Z" fill="#0e0e0e"/>
<ellipse cx="887" cy="706" rx="20" ry="50" fill="#0d0d0d" transform="rotate(10 887 706)"/>
<ellipse cx="888" cy="704" rx="14" ry="40" fill="#1f1f1f" transform="rotate(10 888 704)"/>
<!-- lock -->
<path d="M553,607 Q553,603 558,602.5 L570,602 Q576,602.5 576,608 L576,630 Q575,636 569,636 L559,636.5 Q553,636 553,631 Z" fill="#a6a6a6" stroke="#7c7c7c" stroke-width="0.8"/>
<path d="M553.5,630 V607 Q554,603 558,603 L570,602.5" fill="none" stroke="#d0d0d0" stroke-width="1"/>
<path d="M567,614 Q560,619 565,625" stroke="#444" stroke-width="1.6" fill="none"/>
<path d="M538,645 L576,643 L576,655 L540,659 Z" fill="#b8b8b8"/>
<path d="M538,645 L541,645 L541,658 L538,658 Z M573,643 L576,643 L576,655 L573,655 Z" fill="#d4d4d4"/>
<path d="M543,656 L570,654 L569,659 L545,661 Z" fill="#1e1e1e"/>
<!-- emboss marks -->
<path d="M533.5,772 L533.5,790 L549.5,786 Z" fill="none" stroke="#7a7a7a" stroke-width="0.9"/>
<path d="M549,786 L534,771" fill="none" stroke="#c8c8c8" stroke-width="0.9"/>
<path d="M536,797 L570,789 Q575,790 575,800 L574,806 L536,818 Q531,819 531,812 L531,802 Q532,798 536,797 Z" fill="none" stroke="#707070" stroke-width="0.9"/>
<path d="M570,789 Q575,790 575,800 L574,806" fill="none" stroke="#d0d0d0" stroke-width="1"/>
<path d="M533,831 L562,823 Q566,824 566,832 L565,839 L533,851 Q528,852 528,845 L528,836 Q529,832 533,831 Z" fill="none" stroke="#707070" stroke-width="0.9"/>
<path d="M562,823 Q566,824 566,832 L565,839" fill="none" stroke="#d0d0d0" stroke-width="1"/>
<circle cx="584" cy="833" r="6" fill="#c4c4c4" stroke="#888" stroke-width="0.8"/>
<path d="M585,829 Q581,832 583,837" fill="none" stroke="#444" stroke-width="1"/>
</svg>



<!-- LOG -->
<div class="a" style="left:254px;top:917px;width:813px;height:53px;background:#fff"></div>


<!-- PANEL HEADERS -->
<div class="a" style="left:0;top:73px;width:239px;height:1px;background:#fbfbf6"></div>
<div class="a" style="left:3px;top:78px;width:215px;height:1px;background:#e4e4e4"></div>
<div class="a" style="left:3px;top:79px;width:215px;height:1px;background:#7c7c7c"></div>
<div class="a" style="left:3px;top:82px;width:215px;height:1px;background:#e4e4e4"></div>
<div class="a" style="left:3px;top:83px;width:215px;height:1px;background:#7c7c7c"></div>
<svg class="a" style="left:222px;top:75px" width="13" height="13"><defs><linearGradient id="rg" x1="0" y1="0" x2="1" y2="1"><stop offset="0" stop-color="#ff7070"/><stop offset="0.4" stop-color="#e01818"/><stop offset="1" stop-color="#b00000"/></linearGradient></defs><rect x="0" y="0" width="12" height="12" rx="1" fill="url(#rg)"/><path d="M2.5,2.5 L9.5,9.5 M9.5,2.5 L2.5,9.5" stroke="#000" stroke-width="2"/><path d="M3.5,3 L10,9.5 M10,3 L3.5,9.5" stroke="#fff" stroke-width="1.6"/></svg>
<div class="a" style="left:2px;top:88px;width:232px;height:862px;border-top:1px solid #a49f8c;border-left:1px solid #a49f8c;border-right:1px solid #f8f8f0;border-bottom:1px solid #f8f8f0"></div>
<div class="a" style="left:3px;top:89px;width:1px;height:860px;background:#6a6a6a"></div>
<div class="a" style="left:3px;top:89px;width:229px;height:1px;background:#6a6a6a"></div>
<div class="a" style="left:235px;top:74px;width:1px;height:900px;background:#c4c4c4"></div>
<div class="a" style="left:239px;top:74px;width:1px;height:838px;background:#a8a493"></div>
<!-- show/hide buttons -->
<div class="a" style="left:5px;top:953px;width:112px;height:18px;background:#ece9d8;border:1px solid #000;box-shadow:inset -1px -1px 0 #808080, inset 1px 1px 0 #fff;text-align:center;line-height:15px">Show all</div>
<div class="a" style="left:120px;top:953px;width:111px;height:18px;background:#ece9d8;border-right:1px solid #404040;border-bottom:1px solid #404040;box-shadow:inset -1px -1px 0 #808080, inset 1px 1px 0 #fff;text-align:center;line-height:16px">Hide all</div>
<div class="a" style="left:4px;top:971px;width:230px;height:1px;background:#fff"></div>

<!-- VIEWPORT HEADER -->
<div class="a" style="left:240px;top:74px;width:828px;height:1px;background:#f2f2f2"></div>
<div class="a" style="left:241px;top:74px;width:1px;height:21px;background:#e8e8e8"></div>
<div class="a" style="left:243px;top:77px;width:27px;height:17px;border:1px solid;border-color:#e0e0e0 #e0e0e0 #dcdcdc #e0e0e0;box-shadow:inset 1px 1px 0 #8a8a8a"></div>
<div class="a" style="left:249px;top:79px;font-weight:bold;font-size:11px;letter-spacing:0.2px">3D</div>
<div class="a" style="left:272px;top:77px;width:725px;height:17px;border-left:1px solid #8a8a8a;border-top:1px solid #8a8a8a;border-bottom:1px solid #dedede;border-right:1px solid #dedede"></div>
<div class="a" style="left:278px;top:78px;white-space:nowrap">&lt;&nbsp;&nbsp;Display</div>
<div class="a" style="left:999px;top:77px;width:50px;height:17px;border:1px solid;border-color:#8a8a8a #dedede #dedede #8a8a8a"></div>
<div class="a" style="left:1051px;top:77px;width:15px;height:17px;border:1px solid;border-color:#8a8a8a #dedede #dedede #8a8a8a"></div>
<svg class="a" style="left:1000px;top:76px" width="66" height="18" viewBox="1000 76 66 18">
<circle cx="1007" cy="84" r="4" fill="#e0e0e0" stroke="#222" stroke-width="1.2"/>
<path d="M1010,87 L1014,91" stroke="#000" stroke-width="2"/>
<path d="M1020,88 Q1019,82 1019,80 Q1020,79 1021,81 L1022,79 Q1023,78 1024,80 L1025,79 Q1026,79 1026,81 L1027,81 Q1029,81 1028,84 L1027,90 Q1024,92 1021,90 Z" fill="#f0f0f0" stroke="#777" stroke-width="0.8"/>
<path d="M1034,83 V79 H1037 M1042,79 H1045 V82 M1045,89 V92 H1042 M1037,92 H1034 V89" stroke="#000" stroke-width="1.3" fill="none"/>
<rect x="1038" y="85" width="7" height="6" fill="#e8e8e8"/>
<circle cx="1037" cy="83" r="2.5" fill="#555"/>
<rect x="1053" y="79.5" width="11" height="11" fill="#f8c8c8" stroke="#e00000" stroke-width="2"/>
<path d="M1054,90 V80 H1063" stroke="#000" stroke-width="1.3" fill="none"/>
</svg>
<div class="a" style="left:1067px;top:73px;width:1px;height:839px;background:#fbfbf6"></div>

<!-- axis -->
<svg class="a" style="left:244px;top:866px" width="36" height="42" viewBox="244 866 36 42">
<path d="M272,872 V902 H258" stroke="#000" stroke-width="1" fill="none"/>
<path d="M270,874 l2,-4 l2,4 M272,870 V872" stroke="#00a000" fill="none"/>
<text x="268" y="876" font-size="8" fill="#00a000" font-family="Liberation Sans">y</text>
<path d="M254,903 H265" stroke="#0000d0" stroke-width="1"/>
<path d="M265,902 H268" stroke="#e8e8e8" stroke-width="1"/>
<text x="247" y="907" font-size="10" fill="#0000e0" font-family="Liberation Sans">z</text>
<path d="M252,898 l4,4 M256,898 l-4,4" stroke="#e00000" stroke-width="1.2"/>
</svg>

<!-- LOG -->
<div class="a" style="left:236px;top:909px;width:833px;height:2px;background:#fbfbf6"></div>
<div class="a" style="left:236px;top:914px;width:832px;height:1px;background:#888"></div>
<svg class="a" style="left:241px;top:915px" width="13" height="13"><rect x="0" y="0" width="12" height="12" rx="1" fill="url(#rg)"/><path d="M2.5,2.5 L9.5,9.5 M9.5,2.5 L2.5,9.5" stroke="#000" stroke-width="2"/><path d="M3.5,3 L10,9.5 M10,3 L3.5,9.5" stroke="#fff" stroke-width="1.6"/></svg>
<div class="a" style="left:243px;top:930px;width:1px;height:40px;background:#e0e0e0"></div>
<div class="a" style="left:244px;top:930px;width:1px;height:40px;background:#7c7c7c"></div>
<div class="a" style="left:247px;top:930px;width:1px;height:40px;background:#e0e0e0"></div>
<div class="a" style="left:248px;top:930px;width:1px;height:40px;background:#7c7c7c"></div>
<div class="a" style="left:253px;top:916px;width:815px;height:56px;border-left:1px solid #a49f8c;border-top:1px solid #a49f8c;border-bottom:1px solid #fff"></div>
<svg class="a" style="left:254px;top:917px" width="50" height="53" viewBox="254 917 50 53">
<path d="M263.5,918 V958" stroke="#a49f8c" stroke-dasharray="1,1" fill="none"/><path d="M265,925.5 H274 M265,941.5 H274 M265,957.5 H274" stroke="#a49f8c" stroke-dasharray="1,1" fill="none"/>
<g id="info"><path d="M278,918.5 H284 L287.5,922 V928 L284,931.5 H278 L274.5,928 V922 Z" fill="#fff" stroke="#000090" stroke-width="1.2"/><rect x="280.5" y="920" width="1.5" height="1.5" fill="#0000e0"/><rect x="280.5" y="923" width="1.5" height="6" fill="#0000e0"/></g>
<use href="#info" y="32"/>
<path d="M281,935 Q279,937 281,943" stroke="#f00" stroke-width="3" fill="none"/>
<circle cx="281" cy="945.5" r="1.3" fill="#f00"/>
</svg>
<div class="a" style="left:295px;top:920px;white-space:nowrap;letter-spacing:0.005px">Performing autosave to "e:\всё для конверта\программы\zmodeler\zmodeler 2.2.2 build 964_export_iv_makcend/Autosave/352_autosave1.z3d"</div>
<div class="a" style="left:295px;top:936px;white-space:nowrap;letter-spacing:-0.05px">CSelectOpenEdges::apply -&gt; Can apply on vertices level only. file:openEdges.cpp line:83</div>
<div class="a" style="left:295px;top:952px;white-space:nowrap;letter-spacing:0.005px">Performing autosave to "e:\всё для конверта\программы\zmodeler\zmodeler 2.2.2 build 964_export_iv_makcend/Autosave/357_autosave1.z3d"</div>
<!-- log scrollbar -->
<div class="a" style="left:1049px;top:917px;width:16px;height:53px;background:#f4f3ee"></div>
<svg class="a" style="left:1049px;top:917px" width="18" height="53" viewBox="1049 917 18 53">
<defs><linearGradient id="sb" x1="0" y1="0" x2="1" y2="1"><stop offset="0" stop-color="#c6d6fc"/><stop offset="1" stop-color="#b4c8f8"/></linearGradient></defs>
<rect x="1050" y="919" width="13" height="14" rx="1.5" fill="url(#sb)"/>
<path d="M1053,928.5 L1056.5,925 L1060,928.5" stroke="#4d6185" stroke-width="2" fill="none"/>
<rect x="1050" y="941" width="13" height="12" rx="1.5" fill="url(#sb)"/>
<rect x="1050" y="955" width="13" height="14" rx="1.5" fill="url(#sb)"/>
<path d="M1053,960.5 L1056.5,964 L1060,960.5" stroke="#4d6185" stroke-width="2" fill="none"/>
<path d="M1065.5,917 V970" stroke="#fff"/>
</svg>

<!-- RIGHT PANEL -->
<div class="a" style="left:1068px;top:73px;width:212px;height:1px;background:#fbfbf6"></div>
<div class="a" style="left:1072px;top:74px;width:1px;height:896px;background:#8a8a8a"></div>
<div class="a" style="left:1075px;top:78px;width:187px;height:1px;background:#e4e4e4"></div>
<div class="a" style="left:1075px;top:79px;width:187px;height:1px;background:#7c7c7c"></div>
<div class="a" style="left:1075px;top:82px;width:187px;height:1px;background:#e4e4e4"></div>
<div class="a" style="left:1075px;top:83px;width:187px;height:1px;background:#7c7c7c"></div>
<svg class="a" style="left:1266px;top:75px" width="13" height="13"><rect x="0" y="0" width="12" height="12" rx="1" fill="url(#rg)"/><path d="M2.5,2.5 L9.5,9.5 M9.5,2.5 L2.5,9.5" stroke="#000" stroke-width="2"/><path d="M3.5,3 L10,9.5 M10,3 L3.5,9.5" stroke="#fff" stroke-width="1.6"/></svg>
<svg class="a" style="left:1265px;top:88px" width="14" height="884" viewBox="1265 88 14 884">
<rect x="1266.5" y="88.5" width="11" height="11" fill="none" stroke="#d4d4d4"/>
<path d="M1277.5,89 V99.5 H1267" stroke="#808080" fill="none"/>
<path d="M1268,97 h8 l-4,-4 z" fill="#000"/>
<path d="M1266.5,958 V100.5 H1277" stroke="#e0e0e0" fill="none"/>
<path d="M1277.5,101 V958.5 H1267" stroke="#7c7c7c" fill="none"/>
<path d="M1268,528.5 h7 M1268,530.5 h7 M1268,532.5 h7" stroke="#000"/>
<rect x="1266.5" y="959.5" width="11" height="11" fill="none" stroke="#d4d4d4"/>
<path d="M1277.5,960 V970.5 H1267" stroke="#808080" fill="none"/>
<path d="M1268,963 h8 l-4,4 z" fill="#000"/>
</svg>

<div class="hb" style="top:90px">Create...</div>
<div class="a" style="left:1092px;top:109px;white-space:nowrap">Copy</div>
<div class="sq" style="top:109px"></div>
<div class="a" style="left:1092px;top:126px;white-space:nowrap">Light...</div>
<div class="a" style="left:1092px;top:143px;white-space:nowrap">Polygon...</div>
<div class="sq" style="top:143px"></div>
<div class="a" style="left:1092px;top:160px;white-space:nowrap">Skeleton...</div>
<div class="a" style="left:1092px;top:177px;white-space:nowrap">Spline...</div>
<div class="a" style="left:1092px;top:194px;white-space:nowrap">Surface...</div>
<div class="sq" style="top:194px"></div>
<div class="hb" style="top:209px">Display...</div>
<div class="a" style="left:1092px;top:228px;white-space:nowrap">Disable</div>
<div class="a" style="left:1092px;top:245px;white-space:nowrap">Enable</div>
<div class="a" style="left:1092px;top:262px;white-space:nowrap">Hide</div>
<div class="a" style="left:1092px;top:279px;white-space:nowrap">Local Axes...</div>
<div class="sq" style="top:279px"></div>
<div class="a" style="left:1092px;top:296px;white-space:nowrap">Show</div>
<div class="a" style="left:1092px;top:313px;white-space:nowrap">[By Name]</div>
<div class="a" style="left:1082px;top:330px;white-space:nowrap">Modify...</div>
<div class="hb" style="top:345px">Select...</div>
<div class="a" style="left:1092px;top:364px;white-space:nowrap">All</div>
<div class="a" style="left:1092px;top:381px;white-space:nowrap">Circle</div>
<div class="a" style="left:1092px;top:398px;white-space:nowrap">Invert</div>
<div class="a" style="left:1092px;top:415px;white-space:nowrap">None</div>
<div class="a" style="left:1092px;top:432px;white-space:nowrap">Open Edges</div>
<div class="a" style="left:1092px;top:449px;white-space:nowrap">Polyline</div>
<div class="a" style="left:1092px;top:466px;white-space:nowrap">Quadr</div>
<div class="a" style="left:1092px;top:483px;white-space:nowrap">Separated</div>
<div class="hb" style="left:1088px;width:172px;top:498px">Single</div>
<div class="a" style="left:1092px;top:517px;white-space:nowrap">[By ID/Extension]</div>
<div class="a" style="left:1092px;top:534px;white-space:nowrap">[By Material]</div>
<div class="a" style="left:1092px;top:551px;white-space:nowrap">[By Name]</div>
<div class="hb" style="top:566px">Surface...</div>
<div class="a" style="left:1092px;top:585px;white-space:nowrap">Mapping...</div>
<div class="a" style="left:1092px;top:602px;white-space:nowrap">Normals...</div>
<div class="a" style="left:1092px;top:619px;white-space:nowrap">Paint...</div>
<div class="sq" style="top:619px"></div>
<!-- STATUS -->
<div class="a" style="left:0;top:974px;width:1280px;height:1px;background:#f4f4f4"></div>
<div class="a" style="left:9px;top:980px;white-space:nowrap;letter-spacing:-0.134px">Click on the node to calculate normals. Can be applied to vertices and in SEL mode.</div>

<div class="a" style="left:893px;top:978px;width:36px;height:15px;background:#ece9d8"></div>
<div class="a" style="left:932px;top:978px;width:99px;height:15px;background:#c6c6dc;border-top:1px solid #fff;border-left:1px solid #fff"></div>
<div class="a" style="left:938px;top:980px;font-weight:bold;white-space:nowrap;letter-spacing:-0.41px">SELECTED MODE</div>
<div class="a" style="left:1036px;top:978px;width:35px;height:15px;border:1px solid;border-color:#d8d8d8 #7a7a7a #7a7a7a #d8d8d8"></div>
<div class="a" style="left:1040px;top:980px;font-weight:bold;white-space:nowrap">Auto</div>
<div class="a" style="left:1074px;top:978px;width:188px;height:15px;border:1px solid;border-color:#7a7a7a #d8d8d8 #d8d8d8 #7a7a7a"></div>
<div class="a" style="left:1077px;top:980px;white-space:nowrap;letter-spacing:-0.1px">Cursor: 1.29090, 0.53876, 0.29111</div>
<svg class="a" style="left:1264px;top:978px" width="16" height="16"><g fill="#e8e8e8"><rect x="11" y="3" width="2" height="2"/><rect x="7" y="7" width="2" height="2"/><rect x="11" y="7" width="2" height="2"/><rect x="3" y="11" width="2" height="2"/><rect x="7" y="11" width="2" height="2"/><rect x="11" y="11" width="2" height="2"/></g><g fill="#8a8a8a"><rect x="10" y="2" width="2" height="2"/><rect x="6" y="6" width="2" height="2"/><rect x="10" y="6" width="2" height="2"/><rect x="2" y="10" width="2" height="2"/><rect x="6" y="10" width="2" height="2"/><rect x="10" y="10" width="2" height="2"/></g></svg>
<div class="a" style="left:3px;top:977px;width:1px;height:15px;background:#fff"></div>

<!-- TASKBAR -->
<div class="a" style="left:0;top:994px;width:1280px;height:30px;background:linear-gradient(#1f5fd9 0,#3d8af2 1px,#2a6fe6 3px,#245fe0 6px,#235bdb 20px,#1f53d0 27px,#1b48bb 30px)"></div>
<div class="a" style="left:0;top:994px;width:88px;height:30px;border-radius:0 12px 12px 0;background:linear-gradient(#3c8f3c 0,#64b864 2px,#4aa84a 5px,#3c9c3c 14px,#379437 24px,#2a7a2a 30px);box-shadow:inset -3px 0 4px rgba(0,60,0,0.5)"></div>
<svg class="a" style="left:10px;top:1000px" width="16" height="17"><path d="M3,2 Q6,0 8,2 L7,8 Q5,6 2,8 Z" fill="#f05a28"/><path d="M9,3 Q12,1 15,3 L14,9 Q11,7 8,9 Z" fill="#7cbf42"/><path d="M2,9 Q5,7 7,9 L6,15 Q4,13 1,15 Z" fill="#1aa0e0"/><path d="M8,10 Q11,8 14,10 L13,16 Q10,14 7,16 Z" fill="#ffc010"/></svg>
<div class="a" style="left:26px;top:999px;color:#fff;font-weight:bold;font-style:italic;font-size:16px;letter-spacing:0px;text-shadow:1px 1px 1px #1a4a1a">пуск</div>
<!-- task buttons -->
<div class="a" style="left:97px;top:998px;width:158px;height:23px;border-radius:3px;background:linear-gradient(#4a90f8,#3a7cf0 40%,#3274ea);box-shadow:inset 1px 1px 0 #6aa6ff, inset -1px -1px 0 #1e4fc0"></div>
<div class="a" style="left:257px;top:998px;width:158px;height:23px;border-radius:3px;background:linear-gradient(#4a90f8,#3a7cf0 40%,#3274ea);box-shadow:inset 1px 1px 0 #6aa6ff, inset -1px -1px 0 #1e4fc0"></div>
<div class="a" style="left:417px;top:998px;width:158px;height:23px;border-radius:3px;background:linear-gradient(#1a44b8,#1e4fc8 40%,#2254cc);box-shadow:inset 1px 1px 0 #10308a, inset -1px -1px 0 #3a6ce0"></div>
<div class="a" style="left:577px;top:998px;width:158px;height:23px;border-radius:3px;background:linear-gradient(#4a90f8,#3a7cf0 40%,#3274ea);box-shadow:inset 1px 1px 0 #6aa6ff, inset -1px -1px 0 #1e4fc0"></div>
<svg class="a" style="left:105px;top:1001px" width="16" height="17"><rect x="1" y="1" width="6" height="15" fill="#5aa080"/><rect x="5" y="2" width="10" height="14" fill="#f0f0f0" stroke="#808080" stroke-width="0.6"/><path d="M7,6 h6 M7,9 h6 M7,12 h6" stroke="#708090"/><rect x="9" y="4" width="3" height="2" fill="#2080e0"/></svg>
<div class="a" style="left:125px;top:1003px;color:#fff;white-space:nowrap">Мои документы</div>
<svg class="a" style="left:266px;top:1001px" width="16" height="16"><path d="M1,9 L8,5 L15,9 L8,13 Z" fill="#e8e8e8" stroke="#606060" stroke-width="0.7"/><path d="M1,7 L8,3 L15,7 L8,11 Z" fill="#f8f8f8" stroke="#606060" stroke-width="0.7"/><path d="M2,5 L8,1 L14,5 L8,9 Z" fill="#fff" stroke="#606060" stroke-width="0.7"/><circle cx="8" cy="5" r="2" fill="#e04020"/></svg>
<div class="a" style="left:286px;top:1003px;color:#fff;white-space:nowrap">jsti4.JPG - Программ...</div>
<svg class="a" style="left:426px;top:1001px" width="16" height="16"><rect width="16" height="16" fill="#ff9e00"/><path d="M6,8 H14 L8,15 H15" stroke="#7a4a08" stroke-width="2.6" fill="none" opacity="0.7"/><path d="M3.5,3.5 H11.5 L4.5,12.5 H12" stroke="#c8b0d8" stroke-width="3.4" fill="none"/><path d="M3.5,3.5 H11.5 L4.5,12.5 H12" stroke="#3c0c80" stroke-width="2.2" fill="none"/></svg>
<div class="a" style="left:446px;top:1003px;color:#fff;white-space:nowrap">360 - ZModeler ver 2....</div>
<svg class="a" style="left:585px;top:1001px" width="16" height="16"><circle cx="8" cy="7.5" r="6.5" fill="#fff"/><circle cx="8" cy="7.5" r="5.5" fill="#2aa0e8"/><path d="M5,6 h6 M5,8.5 h6" stroke="#fff" stroke-width="1.2"/><path d="M6,13 L5,16 L9,13 Z" fill="#2aa0e8"/></svg>
<div class="a" style="left:605px;top:1003px;color:#fff;white-space:nowrap">Мажай</div>
<!-- media bar -->
<div class="a" style="left:874px;top:997px;width:170px;height:25px;background:linear-gradient(#3a3a3a,#111 50%,#000);border:1px solid #000;border-radius:2px"></div>
<svg class="a" style="left:874px;top:997px" width="170" height="25" viewBox="874 997 170 25">
<circle cx="886" cy="1009.5" r="7" fill="#4f8ff0" stroke="#e0e0e0" stroke-width="1.5"/>
<path d="M884,1006 L890,1009.5 L884,1013 Z" fill="#102060"/>
<rect x="898" y="1001.5" width="132" height="16" rx="8" fill="#1a1a1a" stroke="#555" stroke-width="0.8"/>
<rect x="909" y="1006" width="7" height="7" fill="#eee"/>
<rect x="924" y="1002.5" width="24" height="14" rx="7" fill="#222" stroke="#666" stroke-width="0.8"/>
<path d="M931,1006 v7 M940,1006 l-7,3.5 l7,3.5 z" stroke="#eee" fill="#eee"/>
<rect x="966" y="1002.5" width="26" height="14" rx="7" fill="#222" stroke="#666" stroke-width="0.8"/>
<path d="M978,1006 l7,3.5 l-7,3.5 z M987,1006 v7" stroke="#eee" fill="#eee"/>
<circle cx="958" cy="1009.5" r="10" fill="#2a2a2a" stroke="#aaa" stroke-width="1.2"/>
<path d="M955,1005 v9 M961,1005 v9" stroke="#eee" stroke-width="2.2"/>
<path d="M999,1007 h2 l3,-3 v11 l-3,-3 h-2 z" fill="#ddd"/><path d="M1006,1006 q2,3.5 0,7 M1008,1005 q3,4.5 0,9" stroke="#ddd" fill="none"/>
<path d="M1013,1008 h6 l-3,3 z" fill="#eee"/>
<path d="M1034,1003 l2,-2 l2,2 M1034,1006 l2,2 l2,-2" stroke="#eee" fill="none" stroke-width="1.2"/>
<rect x="1034.5" y="1014.5" width="6" height="5" fill="none" stroke="#eee"/><path d="M1036.5,1014 v-2 h6 v5 h-2" stroke="#eee" fill="none"/>
</svg>
<div class="a" style="left:1053px;top:1002px;width:14px;height:16px;background:#3b73dc;color:#fff;line-height:16px;font-size:11px;text-align:center">RL</div>
<!-- tray -->
<div class="a" style="left:1079px;top:994px;width:201px;height:30px;background:linear-gradient(#0c58c8 0,#14a0ee 1px,#1098e8 4px,#0c92e4 15px,#0a8ade 26px,#0a78d0 30px);border-left:1px solid #0a4ab0;box-shadow:inset 1px 0 0 #3ab8f8"></div>
<svg class="a" style="left:1088px;top:998px" width="192" height="24" viewBox="1088 998 192 24">
<path d="M1098,1004 L1093,1014 H1103 Z" stroke="#0a5a20" fill="none" stroke-width="1"/>
<circle cx="1098" cy="1004" r="2" fill="#20e020"/><circle cx="1093" cy="1014" r="2" fill="#20e020"/><circle cx="1103" cy="1014" r="2" fill="#20e020"/>
<ellipse cx="1115.5" cy="1010" rx="7.5" ry="7" fill="#7ac43a"/>
<path d="M1111,1010 l3,3 l6,-6" stroke="#fff" stroke-width="2.2" fill="none"/>
<g id="flw"><circle cx="1133.5" cy="1010" r="7" fill="#6cc030"/><circle cx="1133.5" cy="1010" r="4.5" fill="#f8e820"/><path d="M1131,1011 q2.5,2 5,0" stroke="#603000" fill="none"/></g>
<use href="#flw" x="18"/>
<rect x="1163" y="1004" width="9" height="9" fill="#909090" stroke="#505050" stroke-width="0.6"/><rect x="1168" y="1001" width="9" height="9" fill="#a0a0a0" stroke="#505050" stroke-width="0.6"/><path d="M1165,1015 h6" stroke="#505050"/>
<rect x="1181" y="1002" width="14" height="16" fill="#fff"/><path d="M1183,1003 L1188,1016 L1194,1003" stroke="#e00020" stroke-width="2.5" fill="none"/><path d="M1189,1012 l5,5" stroke="#000" stroke-width="2"/>
<g fill="#f0f0f0" stroke="#707070" stroke-width="0.5"><rect x="1199" y="1013" width="2" height="3"/><rect x="1202" y="1011" width="2" height="5"/><rect x="1205" y="1009" width="2" height="7"/><rect x="1208" y="1006" width="2" height="10"/><rect x="1211" y="1004" width="2" height="12"/></g>
<path d="M1207,1017 l4,-7 l4,7 z" fill="#f8d020" stroke="#806000" stroke-width="0.6"/>
<path d="M1217,1006 h3 l5,-4 v16 l-5,-4 h-3 z" fill="#e8e8f0" stroke="#1a3a80" stroke-width="0.8"/>
<path d="M1227,1007 q2,3 0,6 M1229.5,1005 q3.5,5 0,10" stroke="#40b040" fill="none" stroke-width="1.2"/>
</svg>
<div class="a" style="left:1239px;top:1003px;color:#fff;white-space:nowrap">22:15</div>

</div></body></html>
